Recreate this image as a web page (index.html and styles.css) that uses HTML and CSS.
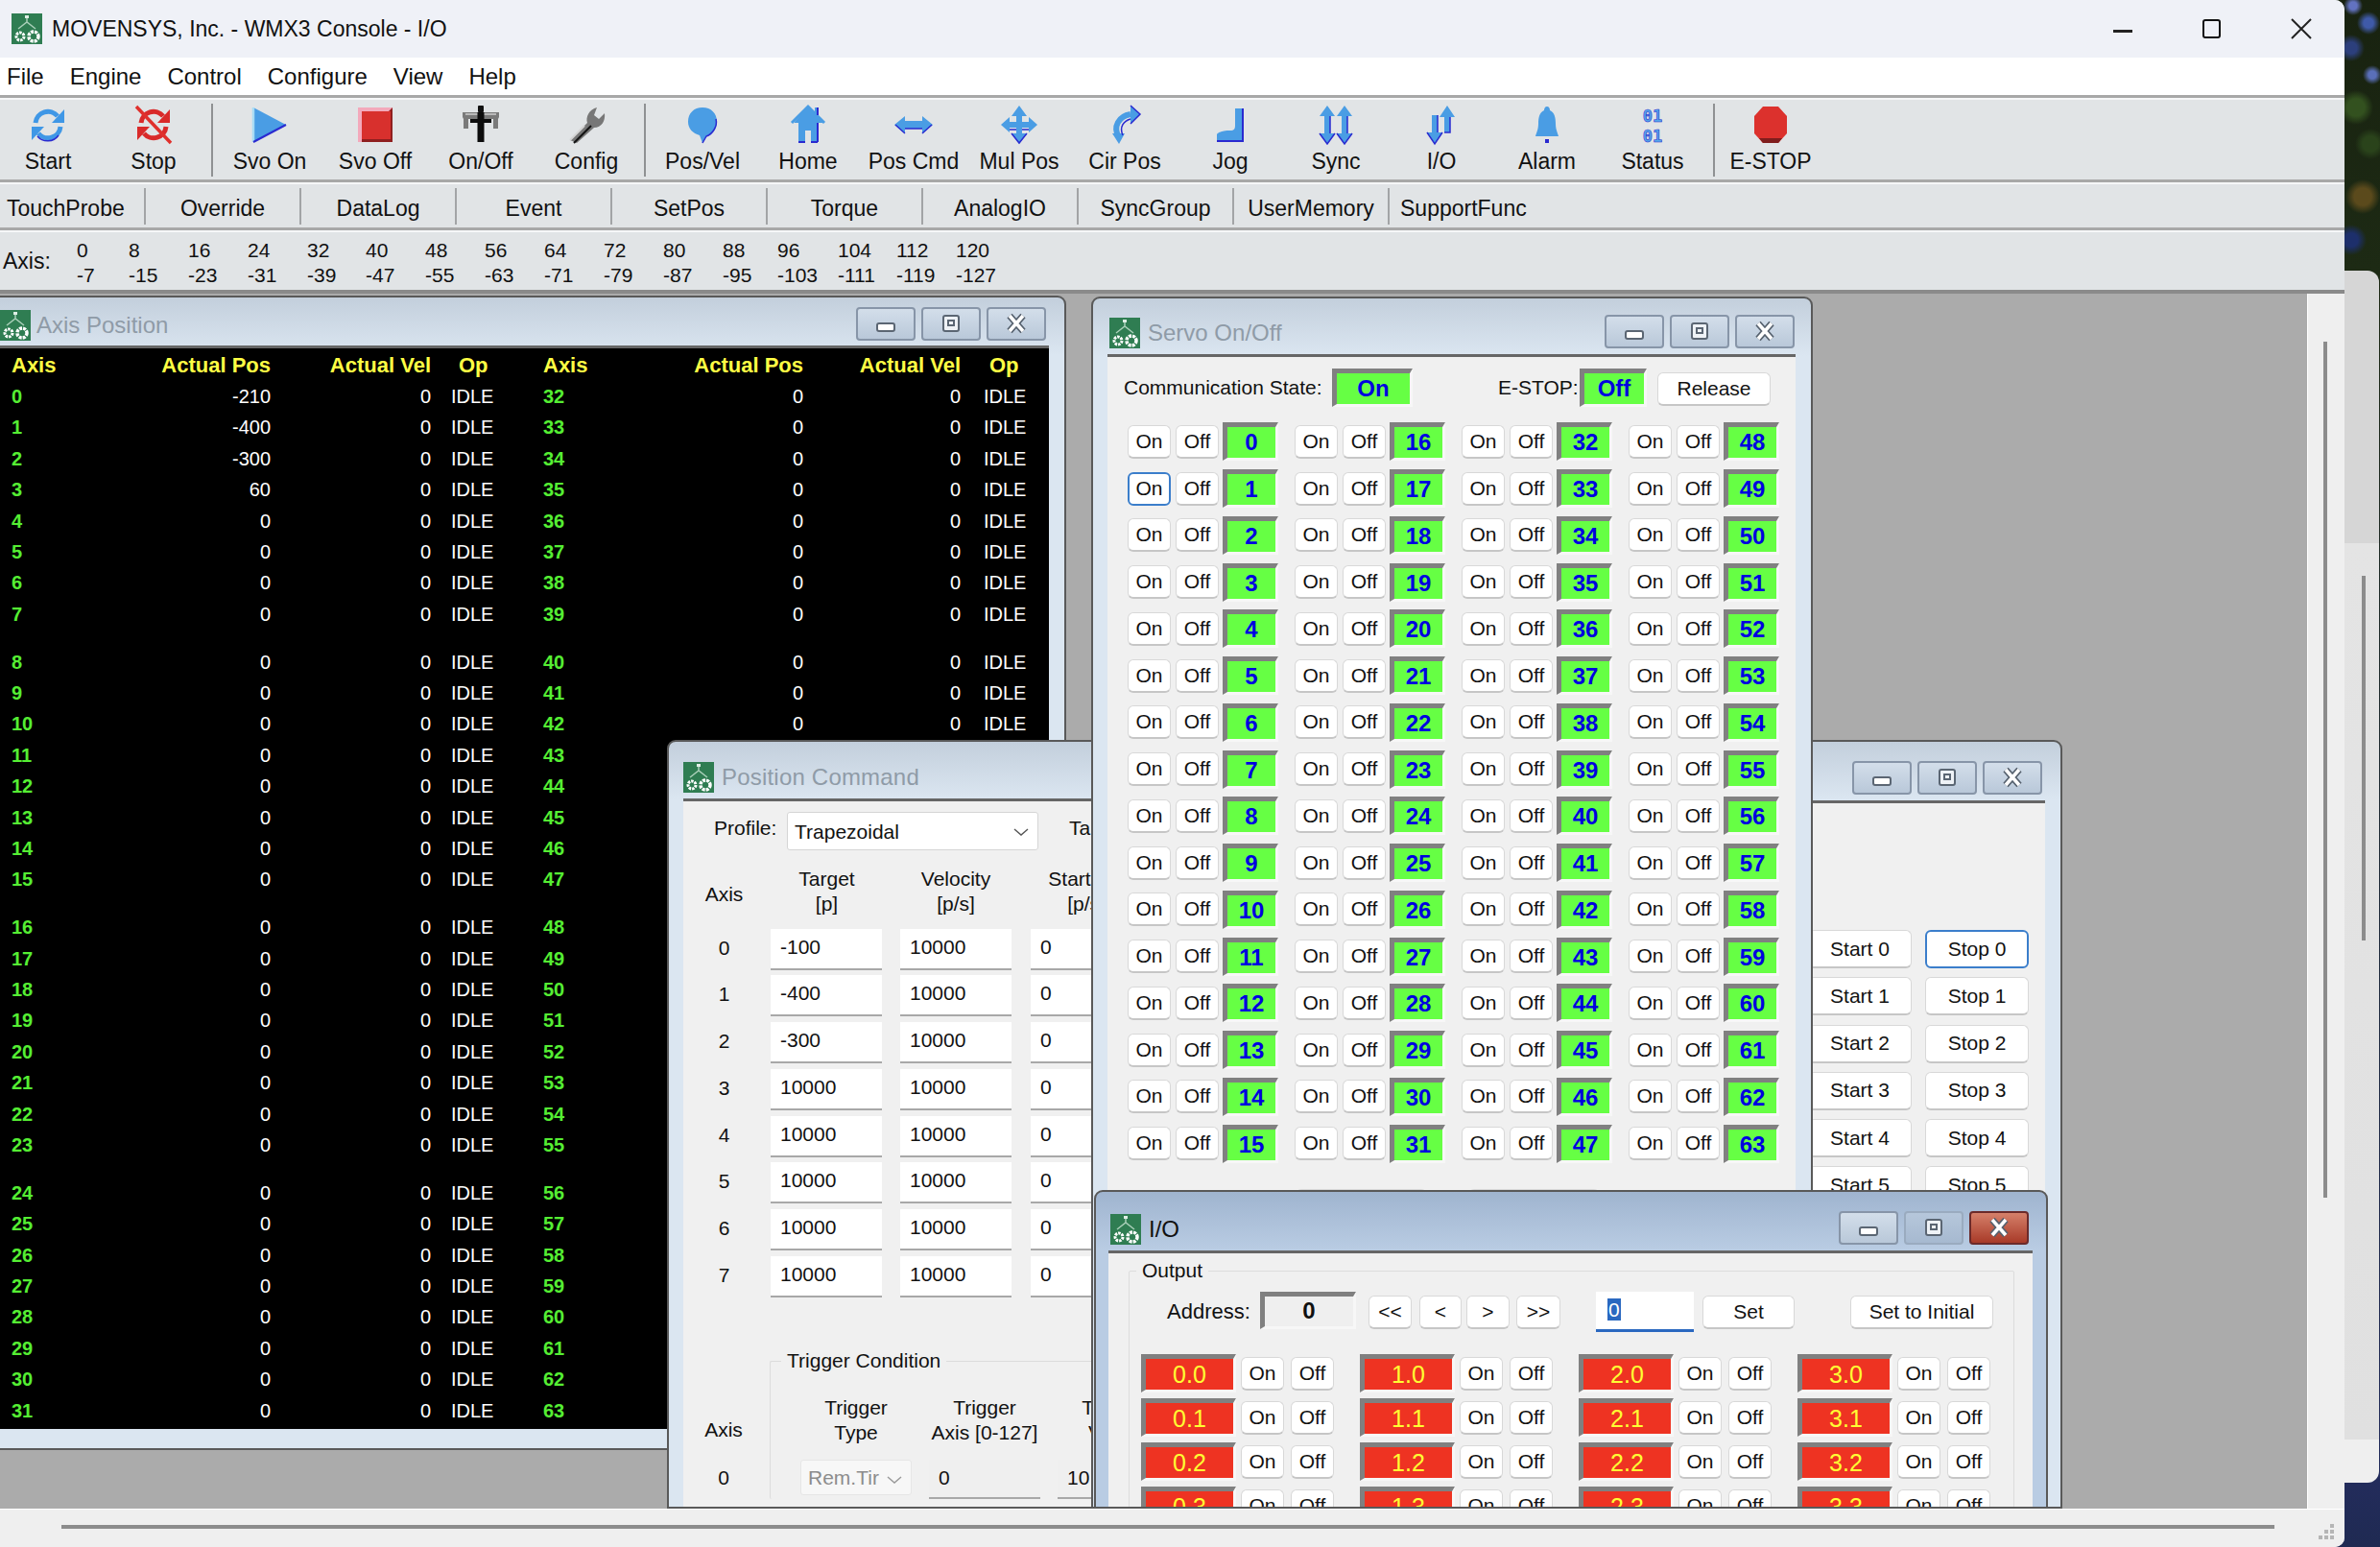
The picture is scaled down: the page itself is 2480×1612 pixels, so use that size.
FILE: index.html
```html
<!DOCTYPE html>
<html lang="en">
<head>
    <meta charset="UTF-8">
    <title>MOVENSYS, Inc. - WMX3 Console - I/O</title>
    <link rel="stylesheet" href="styles.css">
</head>
<body>
    <svg class="defs" width="0" height="0">
        <symbol id="appicon" viewBox="0 0 32 32">
            <rect width="32" height="32" fill="#2f7d52"/>
            <path d="M16 3v6M7 16l9-7 9 7" stroke="#a9cfb8" stroke-width="1.5" fill="none"/>
            <rect x="14" y="2" width="4" height="3" fill="#dfeee5"/>
            <circle cx="9" cy="24" r="4" fill="none" stroke="#fff" stroke-width="3" stroke-dasharray="2.5 1"/>
            <circle cx="23" cy="24" r="5" fill="none" stroke="#fff" stroke-width="3.5" stroke-dasharray="3 1"/>
        </symbol>
        <symbol id="gl-min" viewBox="0 0 24 24">
            <rect x="3" y="11" width="18" height="8" rx="2" fill="#fff" stroke="#5b6673" stroke-width="2"/>
        </symbol>
        <symbol id="gl-max" viewBox="0 0 24 24">
            <rect x="4" y="3" width="16" height="16" rx="2" fill="#eef2f6" stroke="#5b6673" stroke-width="2"/>
            <rect x="9" y="8" width="6" height="5" fill="none" stroke="#5b6673" stroke-width="2"/>
        </symbol>
        <symbol id="gl-close" viewBox="0 0 24 24">
            <path d="M5 3l14 16M19 3L5 19" stroke="#56616e" stroke-width="7"/>
            <path d="M5 3l14 16M19 3L5 19" stroke="#fff" stroke-width="3.5"/>
        </symbol>
    </svg>

    <div class="desktop">
        <div class="back-win">
            <div class="back-thumb"></div>
            <div class="back-box"></div>
        </div>
    </div>

    <div class="app">
        <div class="titlebar">
            <svg class="app-icon"><use href="#appicon"/></svg>
            <span class="title-text">MOVENSYS, Inc. - WMX3 Console - I/O</span>
            <div class="sys-btns">
                <svg width="92" height="24" viewBox="0 0 92 24"><rect x="0" y="13" width="20" height="3" fill="#222"/></svg>
                <svg width="92" height="24" viewBox="0 0 92 24"><rect x="2" y="3" width="17" height="18" rx="2" fill="none" stroke="#111" stroke-width="2"/></svg>
                <svg width="32" height="24" viewBox="0 0 32 24"><path d="M2 2l20 20M22 2L2 22" stroke="#222" stroke-width="2"/></svg>
            </div>
        </div>
        <div class="menubar">
            <span>File</span><span>Engine</span><span>Control</span><span>Configure</span><span>View</span><span>Help</span>
        </div>
        <div class="rule"></div>

        <div class="toolbar">
            <div class="tb-btn first">
                <svg viewBox="0 0 40 40"><path d="M7 18a13 13 0 0 1 23-7" fill="none" stroke="#3f97e6" stroke-width="5"/><path d="M37 4v14H24z" fill="#3f97e6"/><path d="M33 22a13 13 0 0 1-23 7" fill="none" stroke="#3f97e6" stroke-width="5"/><path d="M3 36V22h13z" fill="#3f97e6"/><path d="M9 32a14 14 0 0 0 22-1" fill="none" stroke="#2a2ad0" stroke-width="1.5"/></svg>
                <span>Start</span>
            </div>
            <div class="tb-btn">
                <svg viewBox="0 0 40 40"><path d="M7 18a13 13 0 0 1 23-7" fill="none" stroke="#d92a2a" stroke-width="5"/><path d="M37 4v14H24z" fill="#d92a2a"/><path d="M33 22a13 13 0 0 1-23 7" fill="none" stroke="#d92a2a" stroke-width="5"/><path d="M3 36V22h13z" fill="#d92a2a"/><path d="M2 1l36 38" stroke="#e0302c" stroke-width="3.5"/></svg>
                <span>Stop</span>
            </div>
            <div class="tb-sep"></div>
            <div class="tb-btn">
                <svg viewBox="0 0 40 40"><path d="M3 2l34 18L3 38z" fill="#4a9de4"/><path d="M3 2v36" stroke="#a9dcf5" stroke-width="2.5"/><path d="M3 38l34-18" stroke="#2a2ad0" stroke-width="2"/></svg>
                <span>Svo On</span>
            </div>
            <div class="tb-btn">
                <svg viewBox="0 0 40 40"><rect x="2" y="2" width="36" height="36" fill="#8f1f1f"/><path d="M2 2h36l-4 4H6v32H2z" fill="#f3a9bb"/><rect x="6" y="6" width="30" height="29" fill="#d8302d"/></svg>
                <span>Svo Off</span>
            </div>
            <div class="tb-btn">
                <svg viewBox="0 0 40 40"><path d="M1 7h38v5l-1 2v10h-5V14H7v10H2V14l-1-2z" fill="#7a7a7a"/><path d="M4 9h32" stroke="#cfcfcf" stroke-width="1.5"/><rect x="17" y="0" width="6" height="7" rx="1" fill="#111"/><rect x="16.5" y="7" width="7" height="31" fill="#0c0c0c"/><rect x="9" y="14" width="22" height="4" fill="#0c0c0c"/></svg>
                <span>On/Off</span>
            </div>
            <div class="tb-btn">
                <svg viewBox="0 0 40 40"><path d="M3 36l18-18c-2-6 2-14 10-16l-3 8 5 4 6-6c1 8-3 15-11 15L10 39z" fill="#777"/><path d="M3 36l18-18" stroke="#111" stroke-width="2" transform="translate(4 3)"/><path d="M3 36l15-15" stroke="#d5d5d5" stroke-width="2"/></svg>
                <span>Config</span>
            </div>
            <div class="tb-sep"></div>
            <div class="tb-btn">
                <svg viewBox="0 0 40 40"><path d="M20 2c9 0 15 6 15 15 0 8-5 13-11 15l-4 7-3-8C10 29 5 24 5 17 5 8 11 2 20 2z" fill="#4a9de4"/><path d="M34 14c2 8-4 16-10 18l-4 7" fill="none" stroke="#2a2ad0" stroke-width="1.5"/></svg>
                <span>Pos/Vel</span>
            </div>
            <div class="tb-btn">
                <svg viewBox="0 0 40 40"><path d="M20 1L6 17v1h4v21h7V26h6v13h7V18h5v-1l-6-7V2h-2v6z" fill="#4a9de4"/><path d="M3 18L20 1l17 17" fill="none" stroke="#4a9de4" stroke-width="3"/><path d="M10 38h7M23 38h7M30 18v20M30 2v8" stroke="#2a2ad0" stroke-width="2" fill="none"/></svg>
                <span>Home</span>
            </div>
            <div class="tb-btn">
                <svg viewBox="0 0 40 40"><path d="M0 20l11-9v5h18v-5l11 9-11 9v-5H11v5z" fill="#4a9de4"/><path d="M11 24h18M1 20l10 9M29 29l10-9" stroke="#2a2ad0" stroke-width="1.5" fill="none"/></svg>
                <span>Pos Cmd</span>
            </div>
            <div class="tb-btn">
                <svg viewBox="0 0 40 40"><path d="M20 0l8 11h-5v6h7v-5l9 8-9 8v-5h-7v6h5l-8 11-8-11h5v-6h-7v5l-9-8 9-8v5h7v-6h-5z" fill="#4a9de4"/><path d="M10 25h7M23 25h7M12 29l8 10 8-10" stroke="#2a2ad0" stroke-width="1.5" fill="none"/></svg>
                <span>Mul Pos</span>
            </div>
            <div class="tb-btn">
                <svg viewBox="0 0 40 40"><path d="M14 33C7 22 14 11 26 9" fill="none" stroke="#4a9de4" stroke-width="6"/><path d="M26 0l10 9-10 10z" fill="#4a9de4"/><path d="M7 29h13l-6 11z" fill="#4a9de4"/><path d="M26 0l10 9-10 10M18 31C14 22 19 16 26 14" fill="none" stroke="#2a2ad0" stroke-width="1.5"/></svg>
                <span>Cir Pos</span>
            </div>
            <div class="tb-btn">
                <svg viewBox="0 0 40 40"><path d="M25 3h8v34H6v-7c2-3 8-4 14-4 4 0 5-2 5-5z" fill="#4a9de4"/><path d="M6 37h27V3" fill="none" stroke="#2a2ad0" stroke-width="2"/></svg>
                <span>Jog</span>
            </div>
            <div class="tb-btn">
                <svg viewBox="0 0 40 40"><path d="M11 0l8 11h-5v18h5l-8 11-8-11h5V11H3zM29 0l8 11h-5v18h5l-8 11-8-11h5V11h-5z" fill="#4a9de4"/><path d="M14 11v18M32 11v18M3 29l8 11 8-11M21 29l8 11 8-11" fill="none" stroke="#2a2ad0" stroke-width="1.5"/></svg>
                <span>Sync</span>
            </div>
            <div class="tb-btn">
                <svg viewBox="0 0 40 40"><path d="M26 0l8 12h-5v16h-6V12h-5zM10 10h6v18h5l-8 12-8-12h5z" fill="#4a9de4"/><path d="M29 12v16h-6M16 10v18M5 28l8 12 8-12" fill="none" stroke="#2a2ad0" stroke-width="1.5"/></svg>
                <span>I/O</span>
            </div>
            <div class="tb-btn">
                <svg viewBox="0 0 40 40"><path d="M20 1c2 0 3 2 3 4 5 2 6 8 6 14 0 6 2 9 3 13H8c1-4 3-7 3-13 0-6 1-12 6-14 0-2 1-4 3-4z" fill="#4a9de4"/><path d="M18 35h4v4h-4z" fill="#2a2ad0"/></svg>
                <span>Alarm</span>
            </div>
            <div class="tb-btn">
                <svg viewBox="0 0 40 40"><text x="20" y="17" class="bits">01</text><text x="20" y="38" class="bits">01</text></svg>
                <span>Status</span>
            </div>
            <div class="tb-sep last"></div>
            <div class="tb-btn">
                <svg viewBox="0 0 40 40"><path d="M12 1h16l9 10v18l-9 10H12L3 29V11z" fill="#dc312d"/><path d="M8 34l4 5h16l4-5z" fill="#7f1d1d"/></svg>
                <span>E-STOP</span>
            </div>
        </div>
        <div class="rule"></div>

        <div class="tabbar">
            <div class="tab first">TouchProbe</div>
            <div class="tab">Override</div>
            <div class="tab">DataLog</div>
            <div class="tab">Event</div>
            <div class="tab">SetPos</div>
            <div class="tab">Torque</div>
            <div class="tab">AnalogIO</div>
            <div class="tab">SyncGroup</div>
            <div class="tab">UserMemory</div>
            <div class="tab last">SupportFunc</div>
        </div>
        <div class="rule"></div>

        <div class="axisbar">
            <span class="axis-label">Axis:</span>
            <div class="axis-grid" id="axisGrid"></div>
        </div>
        <div class="rule dark"></div>

        <div class="client">
            <div class="mdi">
                <!-- Axis Position -->
                <div class="win win-axis">
                    <div class="win-title">
                        <svg class="app-icon"><use href="#appicon"/></svg>
                        <span class="win-name">Axis Position</span>
                        <div class="win-btns">
                            <div class="win-btn"><svg><use href="#gl-min"/></svg></div>
                            <div class="win-btn"><svg><use href="#gl-max"/></svg></div>
                            <div class="win-btn"><svg><use href="#gl-close"/></svg></div>
                        </div>
                    </div>
                    <div class="win-body axis-table" id="axisTable">
                        <div class="ax-head">
                            <span>Axis</span><span class="r">Actual Pos</span><span class="r">Actual Vel</span><span class="op">Op</span>
                            <span>Axis</span><span class="r">Actual Pos</span><span class="r">Actual Vel</span><span class="op2">Op</span>
                        </div>
                    </div>
                </div>

                <!-- window behind Servo, only the right side shows -->
                <div class="win win-run">
                    <div class="win-title">
                        <div class="win-btns">
                            <div class="win-btn"><svg><use href="#gl-min"/></svg></div>
                            <div class="win-btn"><svg><use href="#gl-max"/></svg></div>
                            <div class="win-btn"><svg><use href="#gl-close"/></svg></div>
                        </div>
                    </div>
                    <div class="win-body run-body" id="runBody"></div>
                </div>

                <!-- Position Command -->
                <div class="win win-pos">
                    <div class="win-title">
                        <svg class="app-icon"><use href="#appicon"/></svg>
                        <span class="win-name">Position Command</span>
                    </div>
                    <div class="win-body pos-body">
                        <div class="profile-row">
                            <span class="profile-label">Profile:</span>
                            <div class="select profile-select">Trapezoidal
                                <svg class="chev" viewBox="0 0 16 10"><path d="M1 2l7 6 7-6" fill="none" stroke="#555" stroke-width="1.4"/></svg>
                            </div>
                            <span class="ta">Ta</span>
                        </div>
                        <div class="pos-grid head">
                            <span>Axis</span>
                            <span>Target<br>[p]</span>
                            <span>Velocity<br>[p/s]</span>
                            <span>Start Vel<br>[p/s]</span>
                        </div>
                        <div class="pos-rows" id="posRows"></div>
                        <div class="trigger">
                            <div class="trigger-axis">
                                <span>Axis</span>
                                <span class="trigger-num">0</span>
                            </div>
                            <fieldset class="group trigger-group">
                                <legend>Trigger Condition</legend>
                                <div class="trigger-grid head">
                                    <span>Trigger<br>Type</span>
                                    <span>Trigger<br>Axis [0-127]</span>
                                    <span>Trigger<br>Value</span>
                                </div>
                                <div class="trigger-grid">
                                    <div class="select disabled">Rem.Tir
                                        <svg class="chev" viewBox="0 0 16 10"><path d="M1 2l7 6 7-6" fill="none" stroke="#999" stroke-width="1.4"/></svg>
                                    </div>
                                    <div class="input disabled">0</div>
                                    <div class="input disabled">10</div>
                                </div>
                            </fieldset>
                        </div>
                    </div>
                </div>

                <!-- Servo On/Off -->
                <div class="win win-servo">
                    <div class="win-title">
                        <svg class="app-icon"><use href="#appicon"/></svg>
                        <span class="win-name">Servo On/Off</span>
                        <div class="win-btns">
                            <div class="win-btn"><svg><use href="#gl-min"/></svg></div>
                            <div class="win-btn"><svg><use href="#gl-max"/></svg></div>
                            <div class="win-btn"><svg><use href="#gl-close"/></svg></div>
                        </div>
                    </div>
                    <div class="win-body servo-body">
                        <div class="comm-row">
                            <span class="comm-label">Communication State:</span>
                            <div class="led green comm-led">On</div>
                            <span class="estop-label">E-STOP:</span>
                            <div class="led green estop-led">Off</div>
                            <button class="btn release">Release</button>
                        </div>
                        <div class="servo-grid" id="servoGrid"></div>
                        <div class="servo-all">
                            <button class="btn">All On</button>
                            <button class="btn">All Off</button>
                        </div>
                    </div>
                </div>

                <!-- I/O -->
                <div class="win win-io">
                    <div class="win-title">
                        <svg class="app-icon"><use href="#appicon"/></svg>
                        <span class="win-name">I/O</span>
                        <div class="win-btns">
                            <div class="win-btn"><svg><use href="#gl-min"/></svg></div>
                            <div class="win-btn inactive"><svg><use href="#gl-max"/></svg></div>
                            <div class="win-btn close"><svg><use href="#gl-close"/></svg></div>
                        </div>
                    </div>
                    <div class="win-body io-body">
                        <fieldset class="group io-group">
                            <legend>Output</legend>
                            <div class="addr-row">
                                <span class="addr-label">Address:</span>
                                <div class="led addr-led">0</div>
                                <button class="btn nav n1">&lt;&lt;</button>
                                <button class="btn nav n2">&lt;</button>
                                <button class="btn nav n3">&gt;</button>
                                <button class="btn nav n4">&gt;&gt;</button>
                                <div class="addr-input"><span class="sel">0</span></div>
                                <button class="btn set">Set</button>
                                <button class="btn initial">Set to Initial</button>
                            </div>
                            <div class="io-grid" id="ioGrid"></div>
                        </fieldset>
                    </div>
                </div>
            </div>
            <div class="vscroll"><div class="vthumb"></div></div>
        </div>
        <div class="hscroll">
            <div class="hthumb"></div>
            <svg class="grip" width="18" height="18" viewBox="0 0 18 18" fill="#b5b5b5">
                <rect x="13" y="1" width="4" height="4"/><rect x="7" y="7" width="4" height="4"/><rect x="13" y="7" width="4" height="4"/>
                <rect x="1" y="13" width="4" height="4"/><rect x="7" y="13" width="4" height="4"/><rect x="13" y="13" width="4" height="4"/>
            </svg>
        </div>
    </div>
    <script src="script.js"></script>
</body>
</html>
```

FILE: styles.css
```css
* {
    box-sizing: border-box;
}
html, body {
    margin: 0;
    padding: 0;
}
body {
    width: 2480px;
    height: 1612px;
    overflow: hidden;
    position: relative;
    font-family: "Liberation Sans", Arial, sans-serif;
    font-size: 21px;
    color: #111;
    background: #1f2a4e;
}
.defs {
    position: absolute;
}
button {
    font-family: inherit;
    font-size: 21px;
    color: #111;
    padding: 0;
}

/* desktop behind the app */
.desktop {
    position: absolute;
    inset: 0;
    background:
        radial-gradient(circle at 2452px 6px, #6272c0 0 4px, transparent 10px),
        radial-gradient(circle at 2468px 24px, #3f5aa8 0 5px, transparent 12px),
        radial-gradient(circle at 2450px 50px, #2c3f7c 0 6px, transparent 14px),
        radial-gradient(circle at 2472px 78px, #5a6fb8 0 4px, transparent 10px),
        radial-gradient(circle at 2455px 112px, #33511f 0 9px, transparent 18px),
        radial-gradient(circle at 2470px 150px, #2a431b 0 8px, transparent 16px),
        radial-gradient(circle at 2462px 205px, #5b4a1c 0 9px, transparent 18px),
        radial-gradient(circle at 2450px 250px, #1d2f6b 0 7px, transparent 16px),
        linear-gradient(#182210 0, #1d2a14 280px, #232c5c 1540px, #1f2a52 100%);
}
.back-win {
    position: absolute;
    left: 2443px;
    top: 282px;
    width: 36px;
    height: 1263px;
    border-radius: 0 12px 12px 0;
    background: linear-gradient(#d6d6d6 0, #d6d6d6 284px, #e4e4e4 284px, #e0e0e0 1218px, #efefef 1218px);
}
.back-thumb {
    width: 4px;
    height: 380px;
    margin: 318px 0 0 18px;
    background: #8c8c8c;
}
.back-box {
    width: 20px;
    height: 24px;
    margin-top: 830px;
    border: 2px solid #222;
    border-left: 0;
    border-bottom-width: 4px;
}

/* main window */
.app {
    position: absolute;
    left: 0;
    top: 0;
    width: 2443px;
    height: 1612px;
    display: flex;
    flex-direction: column;
    background: #f0f0f0;
    border-radius: 0 10px 10px 0;
    overflow: hidden;
}
.titlebar {
    height: 60px;
    flex: none;
    display: flex;
    align-items: center;
    padding-left: 12px;
    background: #eff1f7;
}
.app-icon {
    width: 32px;
    height: 32px;
    flex: none;
}
.title-text {
    margin-left: 10px;
    font-size: 23px;
}
.sys-btns {
    margin-left: auto;
    display: flex;
    align-items: center;
    margin-right: 25px;
}
.menubar {
    height: 39px;
    flex: none;
    display: flex;
    align-items: center;
    padding: 0 0 0 7px;
    background: #fff;
    font-size: 24px;
}
.menubar span {
    margin-right: 27px;
}
.rule {
    height: 5px;
    flex: none;
    background: #a8a8a8;
    border-bottom: 2px solid #f6f7f8;
}
.rule.dark {
    height: 4px;
    background: #8a8a8a;
    border-bottom: 0;
}

.toolbar {
    height: 83px;
    flex: none;
    display: flex;
    background: #e1e4e6;
}
.tb-btn {
    width: 110px;
    flex: none;
    display: flex;
    flex-direction: column;
    align-items: center;
    padding-top: 6px;
    font-size: 23px;
}
.tb-btn.first {
    margin-left: -5px;
}
.tb-btn svg {
    width: 40px;
    height: 40px;
    overflow: visible;
}
.tb-btn span {
    line-height: 28px;
    margin-top: 4px;
}
.bits {
    font-family: "DejaVu Sans Mono", monospace;
    font-size: 17px;
    font-weight: bold;
    text-anchor: middle;
    fill: #55a8ea;
    stroke: #2a2ad0;
    stroke-width: 0.6;
}
.tb-sep {
    width: 2px;
    height: 76px;
    margin: 4px 4px 0 5px;
    background: #8f9193;
}
.tb-sep.last {
    margin: 4px 3px 0 8px;
}

.tabbar {
    height: 45px;
    flex: none;
    display: flex;
    padding-top: 4px;
    background: #e1e4e6;
    font-size: 23px;
}
.tab {
    width: 162px;
    height: 38px;
    flex: none;
    text-align: center;
    line-height: 42px;
    border-right: 2px solid #a2a4a6;
}
.tab.first {
    width: 152px;
    text-align: left;
    padding-left: 7px;
}
.tab.last {
    border-right: 0;
    text-align: left;
    padding-left: 11px;
}

.axisbar {
    height: 60px;
    flex: none;
    display: flex;
    background: #e1e4e6;
    font-size: 21px;
}
.axis-label {
    width: 80px;
    padding-left: 3px;
    font-size: 23px;
    line-height: 60px;
}
.axis-grid {
    display: grid;
    grid-auto-flow: column;
    grid-template-rows: 26px 26px;
    grid-template-columns: 54px 62px 62px 62px 61px 62px 62px 62px 62px 62px 62px 57px 63px 61px 62px 62px;
    padding-top: 6px;
    line-height: 26px;
}

/* client area */
.client {
    height: 1266px;
    flex: none;
    display: flex;
}
.mdi {
    width: 2405px;
    position: relative;
    overflow: hidden;
    background: #ababab;
    border-right: 1px solid #fff;
}
.vscroll {
    flex: 1;
    background: #efefef;
}
.vthumb {
    width: 4px;
    height: 892px;
    margin: 50px 0 0 16px;
    background: #8c8c8c;
}
.hscroll {
    height: 40px;
    flex: none;
    position: relative;
    background: #efefef;
    border-top: 1px solid #fff;
}
.hthumb {
    height: 4px;
    margin: 16px 73px 0 64px;
    background: #8c8c8c;
}
.grip {
    position: absolute;
    right: 10px;
    bottom: 7px;
}

/* child windows */
.win {
    position: absolute;
    border: 2px solid #595959;
    border-radius: 9px 9px 0 0;
    padding: 0 16px 0 15px;
    background: linear-gradient(#c3cfdc, #dbe6f1 60px);
    display: flex;
    flex-direction: column;
    overflow: hidden;
}
.win-title {
    flex: none;
    display: flex;
    align-items: flex-end;
    padding-bottom: 6px;
}
.win-name {
    margin-left: 8px;
    font-size: 24px;
    line-height: 32px;
    color: #8f9ba7;
}
.win-btns {
    margin-left: auto;
    margin-right: 3px;
    display: flex;
    gap: 6px;
}
.win-btn {
    width: 62px;
    height: 35px;
    display: flex;
    align-items: center;
    justify-content: center;
    border: 2px solid #8795a8;
    border-radius: 4px;
    background: linear-gradient(#d3deea, #b9c8d9);
}
.win-btn svg {
    width: 24px;
    height: 24px;
}
.win-btn.close {
    border-color: #6b2a2a;
    background: linear-gradient(#d5806a, #a83a28);
}
.win-btn.inactive {
    border-color: #9aabbf;
    background: linear-gradient(#b6c7db, #a6b9d0);
}
.win-body {
    flex: 1;
    min-height: 0;
    border-top: 3px solid #666;
    background: #f0f0f0;
}

/* Axis Position */
.win-axis {
    left: -17px;
    top: 2px;
    width: 1128px;
    height: 1203px;
    padding-bottom: 20px;
}
.win-axis .win-title {
    height: 50px;
    padding-bottom: 5px;
}
.win-axis .win-name {
    margin-left: 6px;
}
.axis-table {
    background: #000;
    color: #fff;
    font-size: 20px;
}
.ax-head, .ax-row {
    display: grid;
    grid-template-columns: 132px 150px 167px 117px 110px 161px 164px 91px;
}
.ax-head span:first-child, .ax-row span:first-child {
    padding-left: 12px;
}
.ax-head {
    height: 34px;
    line-height: 35px;
    color: #ffff44;
    font-weight: bold;
    font-size: 22px;
}
.ax-row {
    height: 32.4px;
    line-height: 32.4px;
}
.ax-row.gap {
    margin-bottom: 17.5px;
}
.r {
    text-align: right;
}
.op {
    padding-left: 29px;
}
.op2 {
    padding-left: 30px;
}
.ax-row .idle {
    padding-left: 21px;
}
.ax-row .idle2 {
    padding-left: 24px;
}
.ax-no {
    color: #55ee33;
    font-weight: bold;
}

/* Position Command */
.win-pos {
    left: 695px;
    top: 465px;
    width: 480px;
    height: 801px;
}
.win-pos .win-title {
    height: 59px;
}
.win-pos .win-name {
    letter-spacing: 0.2px;
}
.pos-body {
    padding-top: 11px;
}
.profile-row {
    display: flex;
    align-items: center;
    height: 40px;
    padding-left: 32px;
}
.profile-label {
    width: 76px;
    margin-top: -6px;
}
.select {
    position: relative;
    height: 40px;
    line-height: 40px;
    padding-left: 7px;
    background: #fff;
    border: 1px solid #d5d5d5;
    border-radius: 3px;
}
.profile-select {
    width: 262px;
}
.chev {
    position: absolute;
    right: 9px;
    top: 15px;
    width: 16px;
    height: 10px;
}
.ta {
    margin-left: 32px;
    margin-top: -6px;
}
.pos-grid {
    display: grid;
    grid-template-columns: 91px 135px 136px 116px;
}
.pos-grid:not(.head) {
    height: 43px;
}
.pos-grid > span {
    text-align: center;
}
.pos-grid.head {
    margin-top: 17px;
    margin-bottom: 12.5px;
    height: 52px;
    line-height: 26px;
    align-items: center;
}
.pos-grid.head span {
    white-space: nowrap;
}
.pos-grid.head span:first-child {
    padding: 6px 6px 0 0;
}
.pos-grid.head span:nth-child(2) {
    padding-right: 18px;
}
.pos-grid.head span:nth-child(3) {
    padding-right: 20px;
}
.pos-rows {
    display: flex;
    flex-direction: column;
    gap: 5.8px;
}
.pos-rows .axis-no {
    line-height: 40px;
    padding-right: 6px;
}
.input {
    width: 116px;
    height: 43px;
    padding-left: 10px;
    line-height: 38px;
    background: #fff;
    border-bottom: 2px solid #a8a8a8;
}
.trigger {
    display: flex;
    margin-top: 54px;
}
.trigger-axis {
    width: 90px;
    flex: none;
    display: flex;
    flex-direction: column;
    align-items: center;
    padding: 71px 6px 0 0;
    line-height: 26px;
}
.trigger-num {
    margin-top: 24px;
}
.group {
    margin: 0;
    min-width: 0;
    border: 1px solid #dcdcdc;
    border-radius: 2px;
}
.group legend {
    line-height: 24px;
    padding: 0 6px;
    font-size: 21px;
}
.trigger-group {
    flex: 1;
    padding: 24px 0 0 31px;
    border-right: 0;
    border-bottom: 0;
}
.trigger-group legend {
    margin-left: -20px;
}
.trigger-grid {
    display: grid;
    grid-template-columns: 116px 116px 116px;
    column-gap: 18px;
}
.trigger-grid.head {
    height: 52px;
    margin-bottom: 15px;
    line-height: 26px;
    text-align: center;
    white-space: nowrap;
}
.select.disabled {
    height: 37px;
    line-height: 35px;
    color: #8c8c8c;
    background: #f7f7f7;
    border-color: #e6e6e6;
}
.input.disabled {
    background: #efefef;
    height: 41px;
}

/* shared */
.btn {
    display: block;
    background: #fff;
    border: 1px solid #d8d8d8;
    border-bottom: 2px solid #c6c6c6;
    border-radius: 6px;
    text-align: center;
}
.btn.focus {
    border: 2px solid #3b7ecb;
}
.led {
    display: flex;
    align-items: center;
    justify-content: center;
    border-style: solid;
    border-width: 5px 3px 3px 5px;
    border-color: #808080 #f7f7f7 #f7f7f7 #808080;
    font-size: 24px;
}
.led.green {
    background: #66ff44;
    color: #0000e0;
    font-weight: bold;
}
.led.red {
    background: #ee3322;
    color: #ffff33;
    font-size: 25px;
}

/* Servo On/Off */
.win-servo {
    left: 1137px;
    top: 3px;
    width: 752px;
    height: 1263px;
}
.win-servo .win-title {
    height: 58px;
}
.win-servo .win-btns {
    margin-right: 1px;
}
.win-servo .app-icon, .win-io .app-icon {
    margin-left: 2px;
}
.servo-body {
    padding-top: 12px;
}
.comm-row {
    display: flex;
    align-items: center;
    height: 40px;
    padding-left: 17px;
}
.comm-label {
    width: 217px;
    white-space: nowrap;
}
.comm-led {
    width: 84px;
    height: 40px;
}
.estop-label {
    margin-left: 89px;
    width: 85px;
    white-space: nowrap;
}
.estop-led {
    width: 70px;
    height: 40px;
}
.release {
    width: 118px;
    height: 35px;
    margin-left: 11px;
    margin-top: 3px;
}
.servo-grid {
    margin-top: 12px;
    padding-left: 21px;
    display: grid;
    grid-template-columns: repeat(4, 174px);
    grid-auto-rows: 48.75px;
}
.servo-cell {
    display: flex;
    align-items: center;
}
.servo-cell .btn {
    width: 45px;
    height: 35px;
    margin-right: 5px;
}
.servo-cell .btn + .btn {
    margin-right: 4px;
}
.servo-cell .led {
    width: 58px;
    height: 40px;
}
.servo-all {
    display: flex;
    margin: 23px 0 0 196px;
    gap: 43px;
}
.servo-all .btn {
    width: 137px;
    height: 35px;
}

/* Start / Stop window */
.win-run {
    left: 1700px;
    top: 465px;
    width: 449px;
    height: 801px;
}
.win-run .win-title {
    height: 61px;
}
.run-body {
    padding: 132px 17px 0 0;
    display: grid;
    grid-template-columns: 108px 108px;
    grid-auto-rows: 40px;
    column-gap: 14px;
    row-gap: 9.3px;
    justify-content: end;
    align-content: start;
}

/* I/O */
.win-io {
    left: 1140px;
    top: 934px;
    width: 994px;
    height: 332px;
    padding: 0 14px 0 13px;
    background: linear-gradient(#9fb4cf, #b9cce3 60px);
}
.win-io .win-title {
    height: 61px;
}
.win-io .win-name {
    color: #111;
}
.win-io .win-btns {
    margin-right: 4px;
}
.io-body {
    padding: 6px 19px 0 21px;
    overflow: hidden;
}
.io-group {
    padding: 9px 0 0 12px;
    height: 300px;
}
.io-group legend {
    margin-left: -5px;
}
.addr-row {
    display: flex;
    align-items: center;
    height: 44px;
    padding-left: 27px;
}
.addr-label {
    width: 97px;
    white-space: nowrap;
    font-size: 22px;
}
.addr-led {
    width: 100px;
    height: 39px;
    margin-top: -4px;
    font-weight: bold;
    background: #efefef;
}
.nav {
    height: 35px;
}
.n1 { width: 45px; margin-left: 13px; }
.n2 { width: 44px; margin-left: 8px; }
.n3 { width: 45px; margin-left: 5px; }
.n4 { width: 46px; margin-left: 7px; }
.addr-input {
    width: 102px;
    height: 42px;
    margin-left: 37px;
    padding-left: 12px;
    line-height: 38px;
    background: #fff;
    border-bottom: 3px solid #2a68c0;
}
.sel {
    background: #2a68c0;
    color: #fff;
    padding: 0 1px;
}
.set {
    width: 96px;
    height: 35px;
    margin-left: 9px;
}
.initial {
    width: 149px;
    height: 35px;
    margin-left: 58px;
}
.io-grid {
    margin-top: 22px;
    display: grid;
    grid-template-columns: repeat(4, 228px);
    grid-auto-rows: 46px;
}
.io-cell {
    display: flex;
    align-items: center;
    height: 40px;
}
.io-cell .led {
    width: 99px;
    height: 40px;
    margin-right: 5px;
}
.io-cell .btn {
    width: 45px;
    height: 35px;
    margin-right: 7px;
}
```

FILE: script.js
```js
// repeated rows are filled from here
function cell(tag, cls, text) {
    const el = document.createElement(tag);
    if (cls) el.className = cls;
    el.textContent = text;
    return el;
}

// axis numbers in the bar
const axisGrid = document.getElementById('axisGrid');
for (let i = 0; i < 16; i++) {
    axisGrid.appendChild(cell('span', '', String(i * 8)));
    axisGrid.appendChild(cell('span', '', String(-(i * 8 + 7))));
}

// Axis Position table, from row 11 on the right half sits under Position Command
const actual = { 0: '-210', 1: '-400', 2: '-300', 3: '60' };
const axisTable = document.getElementById('axisTable');
for (let i = 0; i < 32; i++) {
    const row = cell('div', 'ax-row', '');
    if (i % 8 === 7 && i < 31) row.classList.add('gap');
    row.appendChild(cell('span', 'ax-no', String(i)));
    row.appendChild(cell('span', 'r', actual[i] || '0'));
    row.appendChild(cell('span', 'r', '0'));
    row.appendChild(cell('span', 'idle', 'IDLE'));
    row.appendChild(cell('span', 'ax-no', String(i + 32)));
    if (i < 11) {
        row.appendChild(cell('span', 'r', '0'));
        row.appendChild(cell('span', 'r', '0'));
        row.appendChild(cell('span', 'idle2', 'IDLE'));
    }
    axisTable.appendChild(row);
}

// Position Command rows
const targets = ['-100', '-400', '-300', '10000', '10000', '10000', '10000', '10000'];
const posRows = document.getElementById('posRows');
targets.forEach(function (target, i) {
    const row = cell('div', 'pos-grid', '');
    row.appendChild(cell('span', 'axis-no', String(i)));
    row.appendChild(cell('div', 'input', target));
    row.appendChild(cell('div', 'input', '10000'));
    row.appendChild(cell('div', 'input', '0'));
    posRows.appendChild(row);
});

// Servo grid, filled row by row with axis counted per column
const servoGrid = document.getElementById('servoGrid');
for (let r = 0; r < 16; r++) {
    for (let c = 0; c < 4; c++) {
        const box = cell('div', 'servo-cell', '');
        const isFocus = r === 1 && c === 0;
        box.appendChild(cell('button', isFocus ? 'btn focus' : 'btn', 'On'));
        box.appendChild(cell('button', 'btn', 'Off'));
        box.appendChild(cell('div', 'led green', String(c * 16 + r)));
        servoGrid.appendChild(box);
    }
}

// Start / Stop buttons
const runBody = document.getElementById('runBody');
for (let i = 0; i < 6; i++) {
    runBody.appendChild(cell('button', 'btn', 'Start ' + i));
    runBody.appendChild(cell('button', i === 0 ? 'btn focus' : 'btn', 'Stop ' + i));
}

// I/O outputs
const ioGrid = document.getElementById('ioGrid');
for (let r = 0; r < 4; r++) {
    for (let c = 0; c < 4; c++) {
        const box = cell('div', 'io-cell', '');
        box.appendChild(cell('div', 'led red', c + '.' + r));
        box.appendChild(cell('button', 'btn', 'On'));
        box.appendChild(cell('button', 'btn', 'Off'));
        ioGrid.appendChild(box);
    }
}
```
